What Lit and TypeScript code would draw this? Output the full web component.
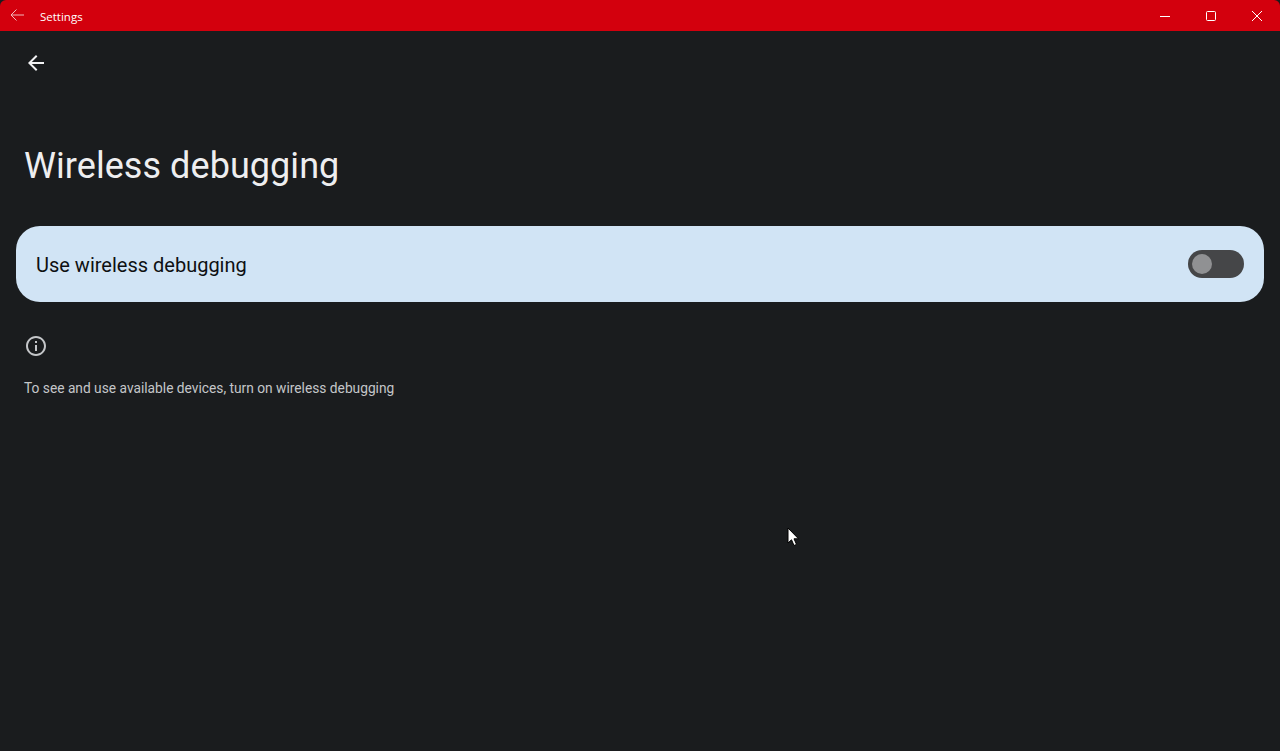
import { LitElement, html, css } from "lit";
import { customElement } from "lit/decorators.js";

@customElement("app-root")
export class AppRoot extends LitElement {
  static styles = css`
    :host {
      display: flex;
      flex-direction: column;
      position: relative;
      width: 1280px;
      height: 751px;
      overflow: hidden;
      background: #1a1c1e;
      font-family: Roboto, "Liberation Sans", sans-serif;
    }
    .titlebar {
      flex: 0 0 31px;
      display: flex;
      align-items: center;
      background: #d3000d;
      color: #fff;
      position: relative;
    }
    .corner { position: absolute; top: 0; width: 8px; height: 8px; background: #1a1c1e; }
    .corner.l { left: 0; clip-path: path("M0 0H6A6 6 0 0 0 0 6Z"); }
    .corner.r { right: 0; clip-path: path("M8 0H2A6 6 0 0 1 8 6Z"); }
    .tb-back { width: 40px; height: 31px; flex: none; padding: 8px 0 0 10px; box-sizing: border-box; opacity: 0.72; }
    .tb-title { font: 11.5px "Open Sans", "Noto Sans", sans-serif; line-height: 31px; position: relative; top: 1px; }
    .spacer { flex: 1; }
    .win { display: flex; }
    .win div { width: 46px; height: 31px; display: flex; align-items: center; justify-content: center; }
    svg { display: block; }
    main { flex: 1; display: flex; flex-direction: column; padding: 0 16px; }
    .back { height: 64px; display: flex; align-items: center; padding-left: 8px; }
    h1 {
      margin: 0;
      padding: 47px 8px 0;
      height: 84px;
      font-weight: 400;
      font-size: 36px;
      letter-spacing: 0.06px;
      line-height: 48px;
      color: #eeeef0;
    }
    .row {
      height: 76px;
      border-radius: 24px;
      background: #d1e4f5;
      display: flex;
      align-items: center;
      justify-content: space-between;
      padding: 0 20px;
      font-size: 20px;
      color: #0e1012;
    }
    .row span { padding-top: 2px; }
    .switch {
      width: 56px;
      height: 28px;
      border-radius: 14px;
      background: #454648;
      display: flex;
      align-items: center;
      padding-left: 4px;
      box-sizing: border-box;
    }
    .thumb { width: 20px; height: 20px; border-radius: 50%; background: #909193; }
    .info { padding: 32px 0 0 8px; }
    .desc { margin: 20px 0 0 8px; font-size: 13.76px; line-height: 20px; color: #c4c6c9; }
    .cursor { position: absolute; left: 787px; top: 527px; }
  `;

  render() {
    return html`
      <div class="titlebar">
        <div class="corner l"></div>
        <div class="tb-back">
          <svg width="14" height="14" viewBox="0 0 14 14" fill="none" stroke="#fff" stroke-width="1">
            <path d="M1 7H14M6.500 1.500L1 7L6.500 12.500" />
          </svg>
        </div>
        <div class="tb-title">Settings</div>
        <div class="spacer"></div>
        <div class="win">
          <div>
            <svg width="10" height="10" viewBox="0 0 10 10" stroke="#fff" stroke-width="1"><path d="M0 5.500H10" /></svg>
          </div>
          <div>
            <svg width="10" height="10" viewBox="0 0 10 10" fill="none" stroke="#fff" stroke-width="1"><rect x="0.5" y="0.5" width="9" height="9" rx="1" /></svg>
          </div>
          <div>
            <svg width="10" height="10" viewBox="0 0 10 10" stroke="#fff" stroke-width="1"><path d="M0 0L10 10M10 0L0 10" /></svg>
          </div>
        </div>
        <div class="corner r"></div>
      </div>
      <main>
        <div class="back">
          <svg width="24" height="24" viewBox="0 0 24 24" fill="#f2f2f4">
            <path d="M20 11H7.830l5.590-5.590L12 4l-8 8 8 8 1.410-1.410L7.830 13H20v-2z" />
          </svg>
        </div>
        <h1>Wireless debugging</h1>
        <div class="row">
          <span>Use wireless debugging</span>
          <div class="switch"><div class="thumb"></div></div>
        </div>
        <div class="info">
          <svg width="24" height="24" viewBox="0 0 24 24" fill="#c4c6c9">
            <path d="M11 7h2v2h-2zm0 4h2v6h-2zm1-9C6.480 2 2 6.480 2 12s4.480 10 10 10 10-4.480 10-10S17.520 2 12 2zm0 18c-4.410 0-8-3.590-8-8s3.590-8 8-8 8 3.590 8 8-3.590 8-8 8z" />
          </svg>
        </div>
        <div class="desc">To see and use available devices, turn on wireless debugging</div>
      </main>
      <svg class="cursor" width="13" height="20" viewBox="0 0 13 20">
        <path d="M1 1V16L4.500 12.800L7 18.500L9.500 17.400L7 11.800H11.500Z" fill="#fff" stroke="#000" stroke-width="1" />
      </svg>
    `;
  }
}
